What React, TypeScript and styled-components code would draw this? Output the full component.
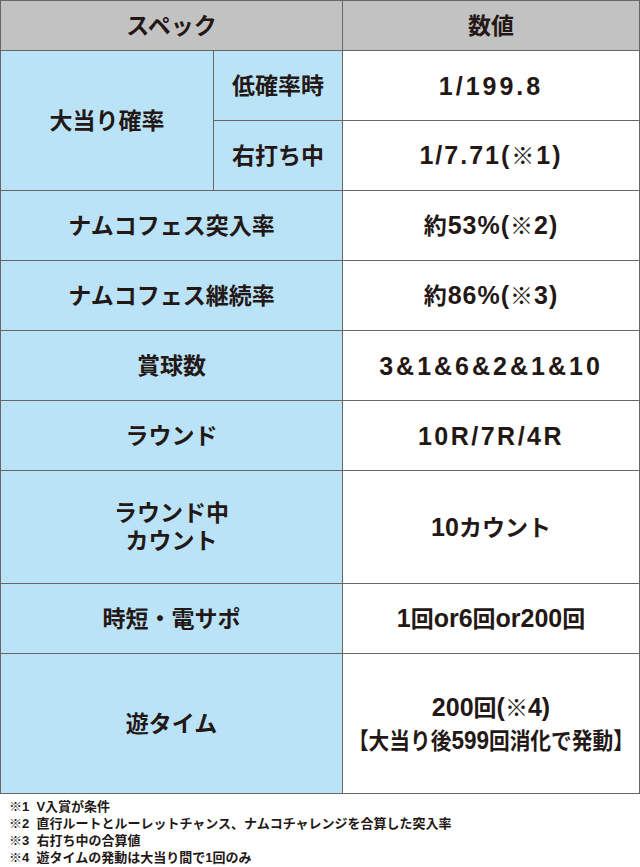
import React from "react";
import styled, { createGlobalStyle } from "styled-components";

const GlobalStyle = createGlobalStyle`
  html, body { margin: 0; padding: 0; background: #ffffff; }
  body {
    font-family: "Liberation Sans", "Noto Sans CJK JP", sans-serif;
    color: #231815;
  }
`;

const Page = styled.div`
  width: 640px;
`;

const Table = styled.div`
  display: grid;
  grid-template-columns: 212px 128px 296px;
  grid-template-rows: 49px repeat(6, 69px) 112px 69px 139px;
  gap: 1px;
  padding: 1px;
  background: #6b6664;
`;

type Span = { $col?: string; $row?: string };

const BaseCell = styled.div<Span>`
  grid-column: ${(p) => p.$col ?? "auto"};
  grid-row: ${(p) => p.$row ?? "auto"};
  display: flex;
  flex-direction: column;
  align-items: center;
  justify-content: center;
  text-align: center;
  white-space: nowrap;
  font-weight: 700;
`;

const HeadCell = styled(BaseCell)`
  background: #c2c2c2;
  font-family: "Liberation Sans", "Noto Sans CJK JP", sans-serif;
  font-size: 23px;
  line-height: 28px;
`;

const LabelCell = styled(BaseCell)`
  background: #bbe3f8;
  font-family: "Liberation Sans", "Noto Sans CJK JP", sans-serif;
  font-size: 23px;
  line-height: 28px;
`;

const LabelLine = styled.div`
  height: 28px;
`;

const ValueCell = styled(BaseCell)`
  background: #ffffff;
  font-family: "Liberation Sans", "Noto Sans CJK JP", sans-serif;
  font-size: 25px;
  line-height: 32px;
`;

const ValueLine = styled.div<{ $track: number; $squeeze?: number }>`
  display: inline-block;
  letter-spacing: ${(p) => p.$track}px;
  transform: scaleX(${(p) => p.$squeeze ?? 1});
  transform-origin: center;
`;

const Jp = styled.span`
  font-size: 23px;
`;

const Notes = styled.div`
  padding: 4px 0 0 9px;
  font-family: "Liberation Sans", "Noto Sans CJK JP", sans-serif;
  font-weight: 700;
  font-size: 13px;
  line-height: 17px;
`;

const NoteLine = styled.div`
  white-space: pre;
`;

function Mixed({ text }: { text: string }) {
  const parts = text.match(/[\x00-\x7F]+|[^\x00-\x7F]+/g) ?? [];
  return (
    <>
      {parts.map((p, i) =>
        /^[\x00-\x7F]+$/.test(p) ? <span key={i}>{p}</span> : <Jp key={i}>{p}</Jp>
      )}
    </>
  );
}

type Row = { label: string[]; values: { text: string; track: number; squeeze?: number }[] };

const rows: Row[] = [
  { label: ["ナムコフェス突入率"], values: [{ text: "約53%(※2)", track: 1 }] },
  { label: ["ナムコフェス継続率"], values: [{ text: "約86%(※3)", track: 1 }] },
  { label: ["賞球数"], values: [{ text: "3&1&6&2&1&10", track: 3 }] },
  { label: ["ラウンド"], values: [{ text: "10R/7R/4R", track: 2.5 }] },
  { label: ["ラウンド中", "カウント"], values: [{ text: "10カウント", track: 0 }] },
  { label: ["時短・電サポ"], values: [{ text: "1回or6回or200回", track: 0 }] },
  {
    label: ["遊タイム"],
    values: [
      { text: "200回(※4)", track: 0 },
      { text: "【大当り後599回消化で発動】", track: 0, squeeze: 0.9 },
    ],
  },
];

const notes = [
  "※1  V入賞が条件",
  "※2  直行ルートとルーレットチャンス、ナムコチャレンジを合算した突入率",
  "※3  右打ち中の合算値",
  "※4  遊タイムの発動は大当り間で1回のみ",
];

export default function App() {
  return (
    <Page>
      <GlobalStyle />
      <Table>
        <HeadCell $col="1 / 3">スペック</HeadCell>
        <HeadCell>数値</HeadCell>

        <LabelCell $row="2 / 4">大当り確率</LabelCell>
        <LabelCell>低確率時</LabelCell>
        <ValueCell>
          <ValueLine $track={3}>
            <Mixed text="1/199.8" />
          </ValueLine>
        </ValueCell>
        <LabelCell>右打ち中</LabelCell>
        <ValueCell>
          <ValueLine $track={2}>
            <Mixed text="1/7.71(※1)" />
          </ValueLine>
        </ValueCell>

        {rows.map((r, i) => (
          <React.Fragment key={i}>
            <LabelCell $col="1 / 3">
              {r.label.map((l, j) => (
                <LabelLine key={j}>{l}</LabelLine>
              ))}
            </LabelCell>
            <ValueCell>
              {r.values.map((v, j) => (
                <ValueLine key={j} $track={v.track} $squeeze={v.squeeze}>
                  <Mixed text={v.text} />
                </ValueLine>
              ))}
            </ValueCell>
          </React.Fragment>
        ))}
      </Table>
      <Notes>
        {notes.map((n, i) => (
          <NoteLine key={i}>{n}</NoteLine>
        ))}
      </Notes>
    </Page>
  );
}
